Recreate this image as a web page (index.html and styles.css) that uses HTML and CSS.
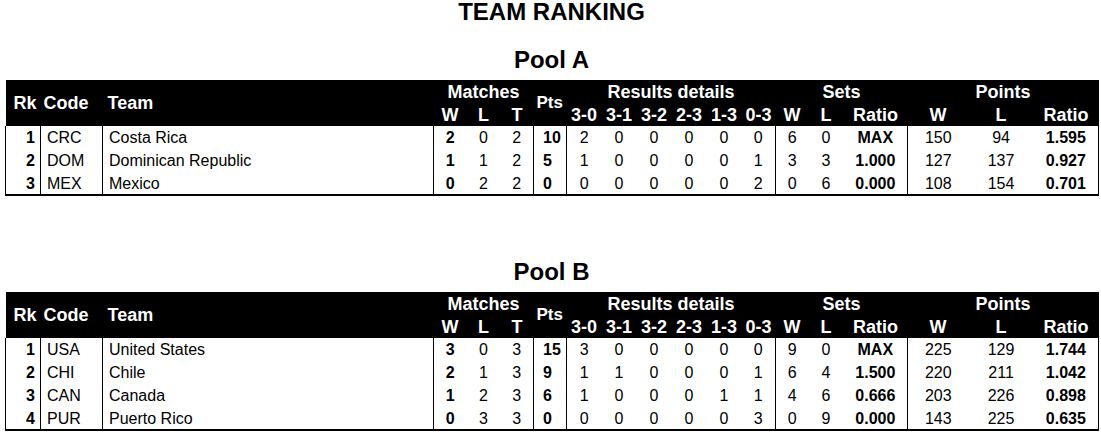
FILE: index.html
```html
<!DOCTYPE html>
<html lang="en">
<head>
<meta charset="utf-8">
<title>Team Ranking</title>
<link rel="stylesheet" href="styles.css">
</head>
<body>
<div class="page">
  <h1 class="title">TEAM RANKING</h1>

  <section class="pool pool-first">
    <h2 class="pool-name">Pool A</h2>
    <table class="rank">
      <colgroup>
        <col class="c-rk"><col class="c-code"><col class="c-team">
        <col class="c-m1"><col class="c-m2"><col class="c-m3">
        <col class="c-pts">
        <col class="c-r"><col class="c-r"><col class="c-r"><col class="c-r"><col class="c-r"><col class="c-r6">
        <col class="c-sw"><col class="c-sl"><col class="c-sr">
        <col class="c-pw"><col class="c-pl"><col class="c-pr">
      </colgroup>
      <thead>
        <tr>
          <th rowspan="2" class="h-rk">Rk</th>
          <th rowspan="2" class="h-left">Code</th>
          <th rowspan="2" class="h-team">Team</th>
          <th colspan="3">Matches</th>
          <th rowspan="2" class="h-pts">Pts</th>
          <th colspan="6">Results details</th>
          <th colspan="3">Sets</th>
          <th colspan="3">Points</th>
        </tr>
        <tr class="sub">
          <th>W</th><th>L</th><th>T</th>
          <th>3-0</th><th>3-1</th><th>3-2</th><th>2-3</th><th>1-3</th><th>0-3</th>
          <th>W</th><th>L</th><th>Ratio</th>
          <th>W</th><th>L</th><th>Ratio</th>
        </tr>
      </thead>
      <tbody>
        <tr>
          <td class="rk sep">1</td><td class="code sep">CRC</td><td class="team sep">Costa Rica</td>
          <td class="b">2</td><td>0</td><td class="sep">2</td>
          <td class="pts sep">10</td>
          <td>2</td><td>0</td><td>0</td><td>0</td><td>0</td><td class="sep">0</td>
          <td>6</td><td>0</td><td class="b sep">MAX</td>
          <td>150</td><td>94</td><td class="b sep">1.595</td>
        </tr>
        <tr>
          <td class="rk sep">2</td><td class="code sep">DOM</td><td class="team sep">Dominican Republic</td>
          <td class="b">1</td><td>1</td><td class="sep">2</td>
          <td class="pts sep">5</td>
          <td>1</td><td>0</td><td>0</td><td>0</td><td>0</td><td class="sep">1</td>
          <td>3</td><td>3</td><td class="b sep">1.000</td>
          <td>127</td><td>137</td><td class="b sep">0.927</td>
        </tr>
        <tr>
          <td class="rk sep">3</td><td class="code sep">MEX</td><td class="team sep">Mexico</td>
          <td class="b">0</td><td>2</td><td class="sep">2</td>
          <td class="pts sep">0</td>
          <td>0</td><td>0</td><td>0</td><td>0</td><td>0</td><td class="sep">2</td>
          <td>0</td><td>6</td><td class="b sep">0.000</td>
          <td>108</td><td>154</td><td class="b sep">0.701</td>
        </tr>
      </tbody>
    </table>
  </section>

  <section class="pool pool-next">
    <h2 class="pool-name">Pool B</h2>
    <table class="rank">
      <colgroup>
        <col class="c-rk"><col class="c-code"><col class="c-team">
        <col class="c-m1"><col class="c-m2"><col class="c-m3">
        <col class="c-pts">
        <col class="c-r"><col class="c-r"><col class="c-r"><col class="c-r"><col class="c-r"><col class="c-r6">
        <col class="c-sw"><col class="c-sl"><col class="c-sr">
        <col class="c-pw"><col class="c-pl"><col class="c-pr">
      </colgroup>
      <thead>
        <tr>
          <th rowspan="2" class="h-rk">Rk</th>
          <th rowspan="2" class="h-left">Code</th>
          <th rowspan="2" class="h-team">Team</th>
          <th colspan="3">Matches</th>
          <th rowspan="2" class="h-pts">Pts</th>
          <th colspan="6">Results details</th>
          <th colspan="3">Sets</th>
          <th colspan="3">Points</th>
        </tr>
        <tr class="sub">
          <th>W</th><th>L</th><th>T</th>
          <th>3-0</th><th>3-1</th><th>3-2</th><th>2-3</th><th>1-3</th><th>0-3</th>
          <th>W</th><th>L</th><th>Ratio</th>
          <th>W</th><th>L</th><th>Ratio</th>
        </tr>
      </thead>
      <tbody>
        <tr>
          <td class="rk sep">1</td><td class="code sep">USA</td><td class="team sep">United States</td>
          <td class="b">3</td><td>0</td><td class="sep">3</td>
          <td class="pts sep">15</td>
          <td>3</td><td>0</td><td>0</td><td>0</td><td>0</td><td class="sep">0</td>
          <td>9</td><td>0</td><td class="b sep">MAX</td>
          <td>225</td><td>129</td><td class="b sep">1.744</td>
        </tr>
        <tr>
          <td class="rk sep">2</td><td class="code sep">CHI</td><td class="team sep">Chile</td>
          <td class="b">2</td><td>1</td><td class="sep">3</td>
          <td class="pts sep">9</td>
          <td>1</td><td>1</td><td>0</td><td>0</td><td>0</td><td class="sep">1</td>
          <td>6</td><td>4</td><td class="b sep">1.500</td>
          <td>220</td><td>211</td><td class="b sep">1.042</td>
        </tr>
        <tr>
          <td class="rk sep">3</td><td class="code sep">CAN</td><td class="team sep">Canada</td>
          <td class="b">1</td><td>2</td><td class="sep">3</td>
          <td class="pts sep">6</td>
          <td>1</td><td>0</td><td>0</td><td>0</td><td>1</td><td class="sep">1</td>
          <td>4</td><td>6</td><td class="b sep">0.666</td>
          <td>203</td><td>226</td><td class="b sep">0.898</td>
        </tr>
        <tr>
          <td class="rk sep">4</td><td class="code sep">PUR</td><td class="team sep">Puerto Rico</td>
          <td class="b">0</td><td>3</td><td class="sep">3</td>
          <td class="pts sep">0</td>
          <td>0</td><td>0</td><td>0</td><td>0</td><td>0</td><td class="sep">3</td>
          <td>0</td><td>9</td><td class="b sep">0.000</td>
          <td>143</td><td>225</td><td class="b sep">0.635</td>
        </tr>
      </tbody>
    </table>
  </section>
</div>
</body>
</html>
```

FILE: styles.css
```css
html, body {
  margin: 0;
  padding: 0;
  background: #fff;
}

body {
  font-family: "Liberation Sans", Arial, sans-serif;
  color: #000;
}

.page {
  padding: 0 3px 0 5px;
}

.title {
  margin: 0;
  font-size: 24px;
  line-height: 24px;
  font-weight: bold;
  text-align: center;
}

.pool-name {
  margin: 0 0 8px;
  font-size: 24px;
  line-height: 24px;
  font-weight: bold;
  text-align: center;
}

.pool-first {
  margin-top: 24px;
}

.pool-next {
  margin-top: 64px;
}

.rank {
  width: 100%;
  table-layout: fixed;
  border-collapse: collapse;
  border-spacing: 0;
}

.c-rk { width: 35px; }
.c-code { width: 62px; }
.c-team { width: 331px; }
.c-m1 { width: 33px; }
.c-m2 { width: 34px; }
.c-m3 { width: 33px; }
.c-pts { width: 33px; }
.c-r { width: 35px; }
.c-r6 { width: 34px; }
.c-sw { width: 33px; }
.c-sl { width: 35px; }
.c-sr { width: 64px; }
.c-pw { width: 61px; }
.c-pl { width: 65px; }
.c-pr { width: 65px; }

.rank thead tr {
  height: 23px;
}

.rank th {
  background: #000;
  color: #fff;
  font-size: 18px;
  font-weight: bold;
  text-align: center;
  vertical-align: middle;
  padding: 0;
  line-height: 20px;
  white-space: nowrap;
  border: 0;
}

.rank th.h-rk {
  text-align: center;
  padding-left: 4px;
}

.rank th.h-left {
  text-align: left;
  padding-left: 3px;
}

.rank th.h-team {
  text-align: left;
  padding-left: 5px;
}

.rank th.h-pts {
  font-size: 17px;
  text-align: left;
  padding-left: 3px;
}

.rank tbody tr {
  height: 23px;
}

.rank tbody tr:last-child td {
  border-bottom: 2px solid #000;
}

.rank td {
  font-size: 16px;
  line-height: 19px;
  padding: 0;
  text-align: center;
  vertical-align: middle;
  white-space: nowrap;
}

.rank td:first-child {
  border-left: 1px solid #000;
}

.rank td.sep {
  border-right: 1px solid #000;
}

.rank td.rk {
  text-align: right;
  font-weight: bold;
  padding-right: 5px;
}

.rank td.code {
  text-align: left;
  padding-left: 6px;
}

.rank td.team {
  text-align: left;
  padding-left: 6px;
}

.rank td.pts {
  text-align: left;
  padding-left: 9px;
  font-weight: bold;
}

.rank td.b {
  font-weight: bold;
}
```
